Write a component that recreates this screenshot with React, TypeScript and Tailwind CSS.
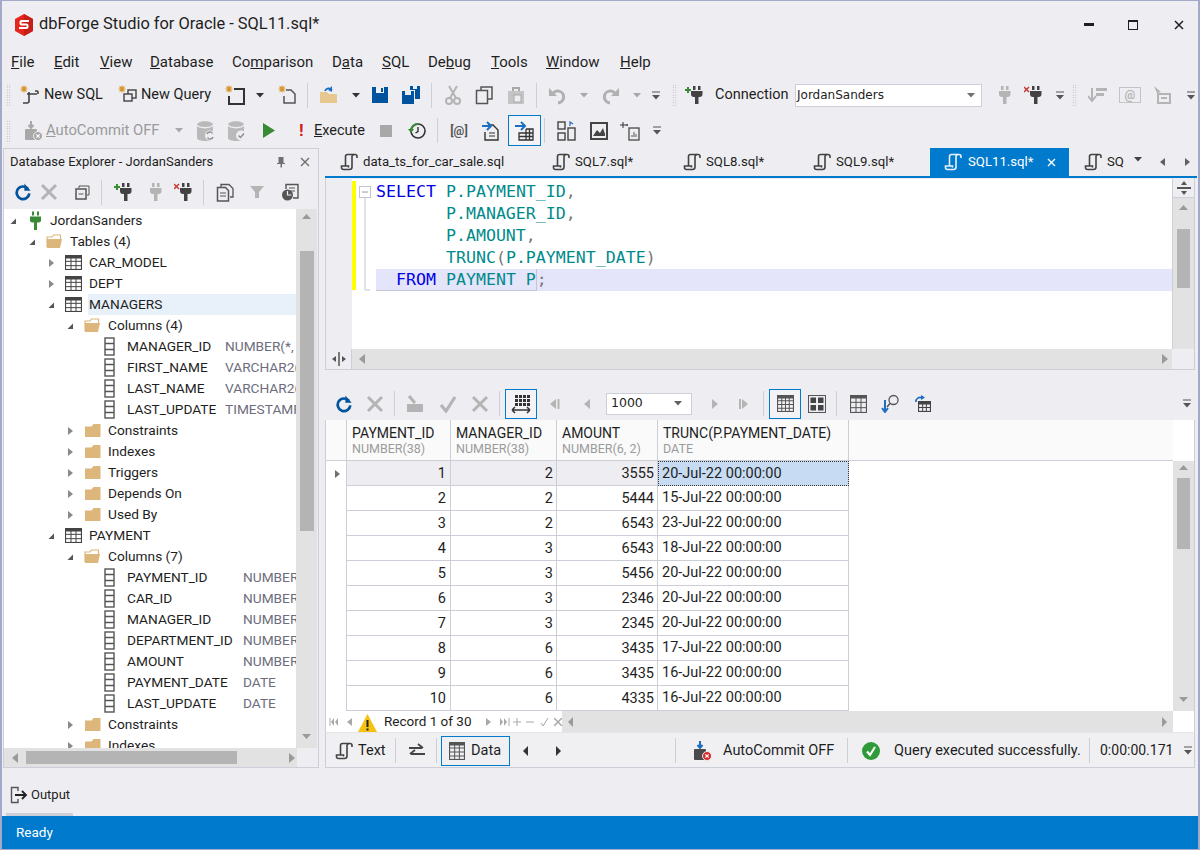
import type { ReactNode } from 'react';

const DARK = '#424242';
const GRAY = '#b4b4b4';
const BLUE = '#00539c';
const TAN = '#dcb67a';

function Svg({ w = 18, h = 18, vb, children }: { w?: number; h?: number; vb?: string; children: ReactNode }) {
  return <svg width={w} height={h} viewBox={vb ?? `0 0 ${w} ${h}`} fill="none" className="shrink-0">{children}</svg>;
}

function Logo() {
  return (
    <Svg w={20} h={24} vb="0 0 20 24">
      <path d="M10 1l9 5v12l-9 5-9-5V6z" fill="#e5261f" />
      <path d="M10 1l9 5v12l-9 5z" fill="#c81e18" />
      <path d="M15 8H7.500a1 1 0 0 0-1 1v1.500a1 1 0 0 0 1 1h5a1 1 0 0 1 1 1V14a1 1 0 0 1-1 1H5" stroke="#fff" strokeWidth="2" />
    </Svg>
  );
}

function Scroll({ c = DARK, size = 18 }: { c?: string; size?: number }) {
  return (
    <Svg w={size} h={size} vb="0 0 18 18">
      <path d="M5.500 13V3.500a2 2 0 0 1 2-2H15a2 2 0 0 1 2 2V5" stroke={c} strokeWidth="1.6" />
      <path d="M14 1.500a2 2 0 0 0-2 2V14a2.500 2.500 0 0 1-2.500 2.500H3.500a2 2 0 0 1-2-2V13h7v1.500" stroke={c} strokeWidth="1.6" />
    </Svg>
  );
}

function Spark({ c = '#d9932b' }: { c?: string }) {
  return <path d="M4 0.500v7M0.500 4h7M1.500 1.500l5 5M6.500 1.500l-5 5" stroke={c} strokeWidth="1.1" />;
}

function Plug({ c = DARK, mark }: { c?: string; mark?: 'plus' | 'x' }) {
  return (
    <Svg w={20} h={20}>
      <g transform="translate(3 0)">
        <path d="M5 1h2.500v4H5zM10 1h2.500v4H10z" fill={c} />
        <path d="M3 6h11.500v3a3 3 0 0 1-3 3h-1v7H7v-7H6a3 3 0 0 1-3-3z" fill={c} />
      </g>
      {mark === 'plus' && <path d="M0 5h6M3 2v6" stroke="#388a34" strokeWidth="2" />}
      {mark === 'x' && <path d="M0 2l5 5M5 2l-5 5" stroke="#c5352b" strokeWidth="1.4" />}
    </Svg>
  );
}

function Refresh({ size = 20 }: { size?: number }) {
  return (
    <Svg w={size} h={size} vb="0 0 20 20">
      <path d="M15.500 6.500a7 7 0 1 0 1.500 5" stroke={BLUE} strokeWidth="3" />
      <path d="M11.500 0.500v8h7z" fill={BLUE} />
    </Svg>
  );
}

function Cross({ c = GRAY, size = 18 }: { c?: string; size?: number }) {
  return (
    <Svg w={size} h={size}>
      <path d="M2 2l14 14M16 2L2 16" stroke={c} strokeWidth="3" />
    </Svg>
  );
}

function Check({ c = GRAY }: { c?: string }) {
  return (
    <Svg w={18} h={18}>
      <path d="M2 10l5 6L16 2" stroke={c} strokeWidth="3.2" />
    </Svg>
  );
}

function Db({ mark }: { mark: 'sync' | 'check' }) {
  return (
    <Svg w={20} h={22}>
      <path d="M1 5c0-5 16-5 16 0v13c0 4-16 4-16 0z" fill="#b9b9b9" />
      <path d="M1 5c2 3.500 14 3.500 16 0" stroke="#eeeef2" strokeWidth="1.5" />
      <circle cx="14" cy="15.500" r="5" fill="#eeeef2" />
      {mark === 'check' ? <path d="M11.500 15.500l2 2 3.500-4" stroke="#8c8c8c" strokeWidth="1.4" /> : <path d="M11 14a3 3 0 0 1 5.500-.5M17 17a3 3 0 0 1-5.500.5" stroke="#8c8c8c" strokeWidth="1.4" />}
    </Svg>
  );
}

function Commit({ disabled }: { disabled?: boolean }) {
  const c = disabled ? '#a8a8a8' : '#4a4a4a';
  return (
    <Svg w={20} h={22}>
      <path d="M3 9h10a1 1 0 0 1 1 1v9a1 1 0 0 1-1 1H3a1 1 0 0 1-1-1v-9a1 1 0 0 1 1-1z" fill={c} />
      <path d="M8 1v6M5.500 5L8 8l2.500-3" stroke={disabled ? '#a8a8a8' : '#1b6ec2'} strokeWidth="2" />
      <circle cx="15" cy="16" r="4.500" fill={disabled ? '#a8a8a8' : '#d92b2b'} stroke="#eeeef2" />
      <path d="M13.300 14.300l3.400 3.400M16.700 14.300l-3.400 3.400" stroke="#fff" strokeWidth="1.2" />
    </Svg>
  );
}

function Grid({ c = DARK, w = 18, h = 16, cols = 4, rows = 4 }: { c?: string; w?: number; h?: number; cols?: number; rows?: number }) {
  const xs = Array.from({ length: cols - 1 }, (_, i) => ((i + 1) * (w - 2)) / cols + 1);
  const ys = Array.from({ length: rows - 1 }, (_, i) => ((i + 1) * (h - 2)) / rows + 1);
  return (
    <Svg w={w} h={h}>
      <rect x="0.500" y="0.500" width={w - 1} height={h - 1} stroke={c} strokeWidth="1.2" />
      <rect x="0.500" y="0.500" width={w - 1} height="3" fill={c} />
      {xs.map((x) => <path key={x} d={`M${x} 1V${h - 1}`} stroke={c} />)}
      {ys.map((y) => <path key={y} d={`M1 ${y + 1}H${w - 1}`} stroke={c} />)}
    </Svg>
  );
}

function FolderOpen() {
  return (
    <Svg w={18} h={15}>
      <path d="M1 3h5l1.500-2h7V6H4L1 13z" fill="none" stroke={TAN} strokeWidth="1.2" />
      <path d="M1 5h15l-2 9H1z" fill={TAN} />
    </Svg>
  );
}

function FolderClosed() {
  return (
    <Svg w={18} h={15}>
      <path d="M1 3.500h6.500L9.500 1h7v13H1z" fill={TAN} />
    </Svg>
  );
}

function ColumnIcon() {
  return (
    <Svg w={11} h={19}>
      <rect x="1" y="1" width="9" height="17" stroke="#555" strokeWidth="1.4" />
      <path d="M1 6.500h9M1 12.500h9" stroke="#555" strokeWidth="1.4" />
    </Svg>
  );
}

function Tri({ open, c = '#555' }: { open?: boolean; c?: string }) {
  return open ? (
    <Svg w={8} h={8}><path d="M7 1.500V7H1.500z" fill={c} /></Svg>
  ) : (
    <Svg w={8} h={10}><path d="M2 1l5 4-5 4z" fill="#8a8a8a" /></Svg>
  );
}

function Caret({ c = DARK }: { c?: string }) {
  return <Svg w={8} h={5}><path d="M0 0h8L4 4.500z" fill={c} /></Svg>;
}

function Overflow() {
  return (
    <Svg w={8} h={9}>
      <path d="M0 1h8" stroke="#555" />
      <path d="M0 4h8L4 8.500z" fill="#555" />
    </Svg>
  );
}

function Gripper() {
  return <div className="w-[5px] h-[22px] shrink-0 bg-[radial-gradient(#a8a8b0_0.7px,transparent_0.8px)] bg-[length:2.5px_2.5px]" />;
}

function Sep({ h = 'h-[25px]' }: { h?: string }) {
  return <div className={`w-px shrink-0 bg-[#ccced8] ${h}`} />;
}

function SideNav({ dir, c = GRAY, bar }: { dir: 'l' | 'r'; c?: string; bar?: boolean }) {
  return (
    <Svg w={14} h={14}>
      {dir === 'l' ? <path d="M9 2L3 7l6 5z" fill={c} /> : <path d="M4 2l6 5-6 5z" fill={c} />}
      {bar && (dir === 'l' ? <path d="M11.500 2v10" stroke={c} strokeWidth="2" /> : <path d="M2 2v10" stroke={c} strokeWidth="2" />)}
    </Svg>
  );
}

type TreeRow = { level: 0 | 1 | 2 | 3 | 4; label: string; icon: 'plug' | 'open' | 'closed' | 'table' | 'col'; open?: boolean; type?: string; wide?: boolean; hl?: boolean };

const tree: TreeRow[] = [
  { level: 0, label: 'JordanSanders', icon: 'plug', open: true },
  { level: 1, label: 'Tables (4)', icon: 'open', open: true },
  { level: 2, label: 'CAR_MODEL', icon: 'table' },
  { level: 2, label: 'DEPT', icon: 'table' },
  { level: 2, label: 'MANAGERS', icon: 'table', open: true, hl: true },
  { level: 3, label: 'Columns (4)', icon: 'open', open: true },
  { level: 4, label: 'MANAGER_ID', icon: 'col', type: 'NUMBER(*,' },
  { level: 4, label: 'FIRST_NAME', icon: 'col', type: 'VARCHAR2(' },
  { level: 4, label: 'LAST_NAME', icon: 'col', type: 'VARCHAR2(' },
  { level: 4, label: 'LAST_UPDATE', icon: 'col', type: 'TIMESTAMP' },
  { level: 3, label: 'Constraints', icon: 'closed' },
  { level: 3, label: 'Indexes', icon: 'closed' },
  { level: 3, label: 'Triggers', icon: 'closed' },
  { level: 3, label: 'Depends On', icon: 'closed' },
  { level: 3, label: 'Used By', icon: 'closed' },
  { level: 2, label: 'PAYMENT', icon: 'table', open: true },
  { level: 3, label: 'Columns (7)', icon: 'open', open: true },
  { level: 4, label: 'PAYMENT_ID', icon: 'col', type: 'NUMBER', wide: true },
  { level: 4, label: 'CAR_ID', icon: 'col', type: 'NUMBER', wide: true },
  { level: 4, label: 'MANAGER_ID', icon: 'col', type: 'NUMBER', wide: true },
  { level: 4, label: 'DEPARTMENT_ID', icon: 'col', type: 'NUMBER', wide: true },
  { level: 4, label: 'AMOUNT', icon: 'col', type: 'NUMBER', wide: true },
  { level: 4, label: 'PAYMENT_DATE', icon: 'col', type: 'DATE', wide: true },
  { level: 4, label: 'LAST_UPDATE', icon: 'col', type: 'DATE', wide: true },
  { level: 3, label: 'Constraints', icon: 'closed' },
  { level: 3, label: 'Indexes', icon: 'closed' },
];

const indent = ['pl-[5px]', 'pl-[24px]', 'pl-[43px]', 'pl-[62px]', 'pl-[95px]'];

function TreeIcon({ icon }: { icon: TreeRow['icon'] }) {
  if (icon === 'plug') return <Svg w={16} h={19}><path d="M4 0.500h2v4H4zM9 0.500h2v4H9z" fill="#388a34" /><path d="M2 5.500h11V9a2.500 2.500 0 0 1-2.500 2.500H9V19H6v-7.500H4.500A2.500 2.500 0 0 1 2 9z" fill="#388a34" /></Svg>;
  if (icon === 'open') return <FolderOpen />;
  if (icon === 'closed') return <FolderClosed />;
  if (icon === 'table') return <Grid c="#444" w={17} h={15} cols={3} rows={3} />;
  return <ColumnIcon />;
}

function TreeItem({ r }: { r: TreeRow }) {
  return (
    <div className={`flex items-center h-[21px] shrink-0 ${indent[r.level]}`}>
      {r.level < 4 && (
        <div className="w-[17px] shrink-0 flex items-center">
          <Tri open={r.open} />
        </div>
      )}
      <div className={`flex items-center shrink-0 ${r.level === 0 ? 'w-[24px] pl-[2px]' : r.level === 4 ? 'w-[28px] pl-[5px]' : 'w-[25px] pl-[1px]'}`}>
        <TreeIcon icon={r.icon} />
      </div>
      <div className={`flex items-center h-[21px] grow min-w-0 ${r.hl ? 'bg-[#e8f0f9]' : ''} ${r.level === 2 ? 'pl-[1px] -ml-[1px]' : ''}`}>
        <span className={`text-[#1e1e1e] whitespace-nowrap shrink-0 ${r.type ? (r.wide ? 'w-[116px]' : 'w-[98px]') : ''}`}>{r.label}</span>
        {r.type && <span className="text-[#6d6d7d] whitespace-nowrap overflow-hidden">{r.type}</span>}
      </div>
    </div>
  );
}

function Explorer() {
  return (
    <div className="w-[316px] shrink-0 border border-[#ccced8] flex flex-col h-[620px]">
      <div className="h-[26px] shrink-0 flex items-center pl-[6px] pr-[6px] text-[13px] text-[#1e1e1e]">
        <span className="grow">Database Explorer - JordanSanders</span>
        <Svg w={10} h={12}><path d="M2.500 1h5v6h1.500v1H6v3.500H4.500V8H1V7h1.500z" fill="#707070" /></Svg>
        <span className="w-[14px]" />
        <Svg w={10} h={10}><path d="M1 1l8 8M9 1l-8 8" stroke="#707070" strokeWidth="1.4" /></Svg>
        <span className="w-[2px]" />
      </div>
      <div className="h-[34px] shrink-0 flex items-center pl-[10px]">
        <div className="w-[26px]"><Refresh size={18} /></div>
        <div className="w-[35px]"><Cross /></div>
        <div className="w-[26px]"><Svg w={15} h={15}><path d="M4 3V1h10v9h-2" stroke="#555" /><rect x="1" y="4" width="10" height="10" stroke="#555" strokeWidth="1.5" /><path d="M3.500 9h5" stroke="#555" /></Svg></div>
        <Sep />
        <div className="w-[12px]" />
        <div className="w-[30px]"><Plug mark="plus" /></div>
        <div className="w-[30px]"><Plug c={GRAY} /></div>
        <div className="w-[29px]"><Plug mark="x" /></div>
        <Sep />
        <div className="w-[12px]" />
        <div className="w-[33px]"><Svg w={19} h={19}><path d="M5 4V1.500h8l4 4V14h-3" stroke="#555" strokeWidth="1.3" /><path d="M1.500 4.500h8l3 3V18h-11z" stroke="#555" strokeWidth="1.5" /><path d="M4 10h6M4 13h6" stroke="#555" /></Svg></div>
        <div className="w-[32px]"><Svg w={16} h={16}><path d="M1 2h14L10 8v6H6V8z" fill={GRAY} /></Svg></div>
        <div><Svg w={19} h={19}><path d="M5 6V1.500h12V15h-5" stroke="#555" strokeWidth="1.4" /><path d="M8 5h6M8 8h6" stroke="#555" /><circle cx="6.500" cy="12" r="5.500" fill="#555" /><path d="M6.500 8v4h4" stroke="#eeeef2" strokeWidth="1.2" /></Svg></div>
      </div>
      <div className="flex grow min-h-0">
        <div className="w-[292px] bg-white overflow-hidden flex flex-col shrink-0 text-[13.7px] pt-[1px]">
          {tree.map((r, i) => <TreeItem key={i} r={r} />)}
        </div>
        <div className="w-[21px] bg-[#e2e2e2] flex flex-col items-center">
          <div className="h-[14px] pt-[5px]"><Svg w={9} h={5}><path d="M0 5L4.500 0 9 5z" fill="#9a9a9a" /></Svg></div>
          <div className="h-[28px]" />
          <div className="w-[14px] h-[280px] bg-[#b4b4b4]" />
          <div className="grow" />
          <div className="h-[14px]"><Svg w={9} h={5}><path d="M0 0h9L4.500 5z" fill="#9a9a9a" /></Svg></div>
        </div>
      </div>
      <div className="h-[19px] shrink-0 flex bg-[#e2e2e2] items-center">
        <div className="w-[22px] pl-[7px]"><Svg w={8} h={10}><path d="M7 0v10L1 5z" fill="#9a9a9a" /></Svg></div>
        <div className="w-[211px] h-[13px] bg-[#b4b4b4]" />
        <div className="w-[51px]" />
        <div className="w-[8px]"><Svg w={8} h={10}><path d="M1 0v10l6-5z" fill="#9a9a9a" /></Svg></div>
        <div className="grow" />
        <div className="w-[21px] h-[19px] bg-[#eeeef2]" />
      </div>
    </div>
  );
}

const tabs: { label: string; w: string; active?: boolean }[] = [
  { label: 'data_ts_for_car_sale.sql', w: 'w-[212px]' },
  { label: 'SQL7.sql*', w: 'w-[131px]' },
  { label: 'SQL8.sql*', w: 'w-[130px]' },
  { label: 'SQL9.sql*', w: 'w-[127px]' },
  { label: 'SQL11.sql*', w: 'w-[139px]', active: true },
];

function TabStrip() {
  return (
    <div className="h-[28px] shrink-0 flex text-[13.2px] pl-[1px] w-[872px]">
      <div className="w-[4px]" />
      {tabs.map((t) =>
        t.active ? (
          <div key={t.label} className={`${t.w} bg-[#007acc] text-white flex items-center pl-[14px]`}>
            <Scroll c="#e9f2fa" />
            <span className="ml-[6px] w-[67px] whitespace-nowrap">{t.label}</span>
            <span className="ml-[12px]"><Svg w={9} h={9}><path d="M1 1l7 7M8 1L1 8" stroke="#fff" strokeWidth="1.4" /></Svg></span>
          </div>
        ) : (
          <div key={t.label} className={`${t.w} flex items-center pl-[10px] text-[#1e1e1e]`}>
            <Scroll />
            <span className="ml-[5px] whitespace-nowrap">{t.label}</span>
          </div>
        ),
      )}
      <div className="flex items-center pl-[15px] text-[#1e1e1e] grow">
        <Scroll />
        <span className="ml-[5px] w-[18px]">SQ</span>
        <span className="ml-[9px] mb-[5px]"><Caret /></span>
        <span className="ml-[18px]"><Svg w={6} h={8}><path d="M5 0v8L0 4z" fill="#606060" /></Svg></span>
        <span className="ml-[18px]"><Svg w={6} h={8}><path d="M1 0v8l5-4z" fill="#606060" /></Svg></span>
      </div>
    </div>
  );
}

function Editor() {
  return (
    <div className="h-[191px] shrink-0 border-l border-r border-b border-[#ccced8] flex flex-col">
      <div className="h-[170px] flex shrink-0">
        <div className="w-[26px] bg-[#eeeef2] shrink-0" />
        <div className="grow bg-white flex min-w-0 pt-[2px]">
          <div className="w-[24px] h-[110px] shrink-0">
            <svg width="24" height="110" viewBox="0 0 24 110" fill="none">
              <rect x="0" y="0" width="4" height="109" fill="#ffff00" />
              <rect x="7.500" y="5.500" width="11" height="11" stroke="#c3c5d0" />
              <path d="M10 11h6" stroke="#9a9aa5" />
              <path d="M13 17v92h5" stroke="#c3c5d0" />
            </svg>
          </div>
          <div className="grow font-['DejaVu_Sans_Mono',monospace] text-[16.6px] leading-[22px] whitespace-pre text-[#008b8b] min-w-0">
            <div><span className="text-[#0000e6]">SELECT</span> P.PAYMENT_ID<span className="text-[#777]">,</span></div>
            <div>       P.MANAGER_ID<span className="text-[#777]">,</span></div>
            <div>       P.AMOUNT<span className="text-[#777]">,</span></div>
            <div>       TRUNC<span className="text-[#777]">(</span>P.PAYMENT_DATE<span className="text-[#777]">)</span></div>
            <div className="bg-[#e4e4fb] h-[22px]"><span className="inline-block border-r border-b border-[#c3c5d0] h-[22px]">  <span className="text-[#0000e6]">FROM</span> PAYMENT P</span><span className="text-[#777]">;</span></div>
          </div>
        </div>
        <div className="w-[22px] bg-[#e2e2e2] shrink-0 flex flex-col items-center border-l border-[#ccced8]">
          <div className="h-[19px] w-full bg-[#eeeef2] flex items-center justify-center border-b border-[#ccced8]">
            <Svg w={14} h={14}><path d="M4 4h6L7 0zM4 10h6l-3 4z" fill="#555" /><path d="M0 7h14" stroke="#555" strokeWidth="2" /></Svg>
          </div>
          <div className="h-[14px] pt-[7px]"><Svg w={9} h={5}><path d="M0 5L4.500 0 9 5z" fill="#9a9a9a" /></Svg></div>
          <div className="h-[17px]" />
          <div className="w-[13px] h-[59px] bg-[#b4b4b4]" />
        </div>
      </div>
      <div className="h-[20px] flex bg-[#e2e2e2] items-center shrink-0">
        <div className="w-[26px] h-[20px] bg-[#eeeef2] flex items-center justify-center border-r border-[#ccced8]">
          <Svg w={14} h={14}><path d="M4 4v6L0 7zM10 4v6l4-3z" fill="#555" /><path d="M7 0v14" stroke="#555" strokeWidth="1.5" /></Svg>
        </div>
        <div className="pl-[6px] grow"><Svg w={8} h={10}><path d="M7 0v10L1 5z" fill="#9a9a9a" /></Svg></div>
        <div className="w-[8px]"><Svg w={8} h={10}><path d="M1 0v10l6-5z" fill="#9a9a9a" /></Svg></div>
        <div className="w-[22px] h-[20px] ml-[3px] bg-[#eeeef2]" />
      </div>
    </div>
  );
}

function GridToolbar() {
  return (
    <div className="h-[31px] shrink-0 flex items-center mt-[18px] pl-[10px]">
      <div className="w-[31px]"><Refresh size={18} /></div>
      <div className="w-[28px]"><Cross /></div>
      <Sep />
      <div className="w-[11px]" />
      <div className="w-[33px]"><Svg w={18} h={18}><path d="M1 9h16v8H1z" fill={GRAY} /><path d="M3 1l6 7" stroke={GRAY} strokeWidth="3" /></Svg></div>
      <div className="w-[32px]"><Check /></div>
      <div className="w-[28px]"><Cross /></div>
      <Sep />
      <div className="w-[5px]" />
      <div className="w-[32px] h-[30px] border border-[#007acc] bg-[#f3f3f6] flex items-center justify-center">
        <Svg w={20} h={20}><g fill="#333">{[5, 9, 13, 17].map((x) => [1, 5, 9].map((y) => <rect key={`${x}${y}`} x={x - 1} y={y} width="3" height="3" />))}</g><path d="M1 16h18M1 16l3-3M1 16l3 3M19 16l-3-3M19 16l-3 3" stroke="#333" strokeWidth="1.5" /></Svg>
      </div>
      <div className="w-[10px]" />
      <div className="w-[34px]"><SideNav dir="l" bar /></div>
      <div className="w-[25px]"><SideNav dir="l" /></div>
      <div className="w-[86px] h-[22px] bg-white border border-[#ccced8] flex items-center justify-between pl-[4px] pr-[9px] text-[#1e1e1e] font-['DejaVu_Sans',sans-serif]">
        <span className="text-[12.5px]">1000</span>
        <Caret c="#606060" />
      </div>
      <div className="w-[16px]" />
      <div className="w-[30px]"><SideNav dir="r" /></div>
      <div className="w-[25px]"><SideNav dir="r" bar /></div>
      <Sep />
      <div className="w-[5px]" />
      <div className="w-[32px] h-[30px] border border-[#007acc] bg-[#f3f3f6] flex items-center justify-center"><Grid c="#555" w={17} h={17} /></div>
      <div className="w-[7px]" />
      <div className="w-[28px]">
        <Svg w={18} h={18}>
          <rect x="0.500" y="0.500" width="17" height="17" stroke="#555" />
          <rect x="2.500" y="2.500" width="5.500" height="5.500" fill="#444" /><rect x="10" y="2.500" width="5.500" height="5.500" fill="#444" /><rect x="2.500" y="10" width="5.500" height="5.500" fill="#444" /><rect x="10" y="10" width="5.500" height="5.500" fill="#444" />
        </Svg>
      </div>
      <Sep />
      <div className="w-[13px]" />
      <div className="w-[31px]"><Grid c="#555" w={17} h={18} cols={3} rows={3} /></div>
      <div className="w-[32px]"><Svg w={19} h={19}><circle cx="12.500" cy="6" r="4.500" stroke="#555" strokeWidth="1.3" /><path d="M9 9.500L6 13" stroke="#555" strokeWidth="1.5" /><path d="M4 6v11M1 14l3 4 3-4" stroke="#1b6ec2" strokeWidth="2" /></Svg></div>
      <div className="w-[20px]"><Svg w={19} h={19}><path d="M3 8a4 4 0 0 1 6-4" stroke="#1b6ec2" strokeWidth="1.6" /><path d="M8 1v5l4-2.500z" fill="#1b6ec2" /><g transform="translate(5 7)"><Grid c="#444" w={13} h={11} cols={3} rows={2} /></g></Svg></div>
      <div className="grow" />
      <div className="pr-[4px]"><Overflow /></div>
    </div>
  );
}

const rows = [
  [1, 2, 3555, '20-Jul-22 00:00:00'],
  [2, 2, 5444, '15-Jul-22 00:00:00'],
  [3, 2, 6543, '23-Jul-22 00:00:00'],
  [4, 3, 6543, '18-Jul-22 00:00:00'],
  [5, 3, 5456, '20-Jul-22 00:00:00'],
  [6, 3, 2346, '20-Jul-22 00:00:00'],
  [7, 3, 2345, '20-Jul-22 00:00:00'],
  [8, 6, 3435, '17-Jul-22 00:00:00'],
  [9, 6, 3435, '16-Jul-22 00:00:00'],
  [10, 6, 4335, '16-Jul-22 00:00:00'],
];

const cols = [
  { name: 'PAYMENT_ID', type: 'NUMBER(38)', w: 'w-[104px]' },
  { name: 'MANAGER_ID', type: 'NUMBER(38)', w: 'w-[106px]' },
  { name: 'AMOUNT', type: 'NUMBER(6, 2)', w: 'w-[101px]' },
  { name: 'TRUNC(P.PAYMENT_DATE)', type: 'DATE', w: 'w-[191px]' },
];

function DataGrid() {
  return (
    <div className="h-[291px] shrink-0 flex border-l border-r border-[#ccced8] text-[14.5px] mt-[1px]">
      <div className="w-[847px] bg-white flex flex-col shrink-0">
        <div className="flex h-[41px] shrink-0 border-b border-[#ccced8]">
          <div className="w-[21px] border-r border-[#ccced8] bg-[#fafafa]" />
          {cols.map((c) => (
            <div key={c.name} className={`${c.w} border-r border-[#ccced8] bg-[#fafafa] pl-[5px] pt-[5px] leading-[16px] text-[14px]`}>
              <div className="text-[#1e1e1e] whitespace-nowrap">{c.name}</div>
              <div className="text-[#9a9a9a] text-[12.5px] whitespace-nowrap">{c.type}</div>
            </div>
          ))}
          <div className="grow bg-[#fafafa]" />
        </div>
        {rows.map((r, i) => (
          <div key={i} className="flex h-[25px] shrink-0">
            <div className="w-[21px] border-r border-[#ccced8] flex items-center justify-center pl-[2px]">
              {i === 0 && <Svg w={6} h={8}><path d="M1 0v8l5-4z" fill="#707070" /></Svg>}
            </div>
            {[0, 1, 2].map((c) => (
              <div key={c} className={`${cols[c].w} border-r border-b border-[#ccced8] text-right pr-[3px] pt-[1px] leading-[23px] text-[#1e1e1e] ${i === 0 ? 'bg-[#eeeef2]' : ''}`}>
                {c === 0 ? <span className="pr-[1px]">{r[c]}</span> : r[c]}
              </div>
            ))}
            <div className={`w-[191px] pt-[1px] leading-[22px] text-[#1e1e1e] ${i === 0 ? 'pl-[3px] bg-[#c7dcf3] border border-dotted border-[#333]' : 'pl-[4px] border-r border-b border-[#ccced8]'}`}>{r[3]}</div>
          </div>
        ))}
      </div>
      <div className="grow bg-white" />
      <div className="w-[21px] bg-[#e2e2e2] flex flex-col items-center shrink-0">
        <div className="h-[41px] w-full bg-white" />
        <div className="h-[17px] pt-[4px]"><Svg w={9} h={5}><path d="M0 5L4.500 0 9 5z" fill="#9a9a9a" /></Svg></div>
        <div className="w-[13px] h-[71px] bg-[#b4b4b4]" />
        <div className="grow" />
        <div className="h-[14px]"><Svg w={9} h={5}><path d="M0 0h9L4.500 5z" fill="#9a9a9a" /></Svg></div>
      </div>
    </div>
  );
}

function Navigator() {
  const small = <Svg w={6} h={8}><path d="M5 0v8L0 4z" fill="#a8a8a8" /></Svg>;
  return (
    <div className="h-[21px] shrink-0 flex items-center border-l border-r border-[#ccced8] bg-white text-[13.5px]">
      <div className="w-[236px] h-full flex items-center pl-[3px] shrink-0">
        <div className="w-[18px]"><Svg w={9} h={8}><path d="M1 0v8" stroke="#a8a8a8" /><path d="M5 0v8L2 4zM9 0v8L6 4z" fill="#a8a8a8" /></Svg></div>
        <div className="w-[11px]">{small}</div>
        <div className="w-[26px] h-[21px] flex items-end">
          <Svg w={19} h={18}><path d="M9.500 0L19 18H0z" fill="#f5c211" /><path d="M9.500 6v7M9.500 14.500v2" stroke="#222" strokeWidth="2" /></Svg>
        </div>
        <span className="whitespace-nowrap text-[#1e1e1e] w-[101px]">Record 1 of 30</span>
        <div className="w-[15px]"><Svg w={6} h={8}><path d="M1 0v8l5-4z" fill="#a8a8a8" /></Svg></div>
        <div className="w-[13px]"><Svg w={10} h={8}><path d="M0 0v8l3-4zM4 0v8l3-4z" fill="#a8a8a8" /><path d="M9 0v8" stroke="#a8a8a8" /></Svg></div>
        <div className="w-[13px]"><Svg w={8} h={8}><path d="M0 4h8M4 0v8" stroke="#a8a8a8" /></Svg></div>
        <div className="w-[14px]"><Svg w={8} h={8}><path d="M0 4h8" stroke="#a8a8a8" /></Svg></div>
        <div className="w-[14px]"><Svg w={9} h={10}><path d="M1 6l2 3 5-8" stroke="#a8a8a8" /></Svg></div>
        <div><Svg w={8} h={8}><path d="M0 0l8 8M8 0L0 8" stroke="#a8a8a8" strokeWidth="1.5" /></Svg></div>
      </div>
      <div className="grow h-full bg-[#e2e2e2] flex items-center justify-between px-[6px]">
        <Svg w={6} h={10}><path d="M5 0v10L0 5z" fill="#9a9a9a" /></Svg>
        <Svg w={6} h={10}><path d="M1 0v10l5-5z" fill="#9a9a9a" /></Svg>
      </div>
      <div className="w-[21px] h-full bg-white shrink-0" />
    </div>
  );
}

function BottomBar() {
  return (
    <div className="h-[35px] shrink-0 flex items-center pt-[1px] text-[14.5px] text-[#1e1e1e] bg-[#f0f0f3] border-t border-[#e4e4ea] border-l border-r border-l-[#ccced8] border-r-[#ccced8]">
      <div className="w-[9px]" />
      <Scroll />
      <span className="ml-[5px] w-[37px]">Text</span>
      <Sep />
      <div className="w-[13px]" />
      <div className="w-[27px]"><Svg w={16} h={16}><path d="M0 5h13M9 1l5 4M2 11h14M6 7l-5 4" stroke="#444" strokeWidth="1.8" /></Svg></div>
      <Sep />
      <div className="w-[4px]" />
      <div className="w-[69px] h-[30px] border border-[#007acc] flex items-center pl-[7px]">
        <Grid c="#555" w={16} h={18} cols={3} rows={4} />
        <span className="ml-[6px]">Data</span>
      </div>
      <div className="w-[13px]" />
      <Svg w={6} h={10}><path d="M5 0v10L0 5z" fill="#333" /></Svg>
      <div className="w-[26px]" />
      <Svg w={6} h={10}><path d="M1 0v10l5-5z" fill="#333" /></Svg>
      <div className="w-[114px]" />
      <Sep />
      <div className="w-[16px]" />
      <Commit />
      <span className="ml-[11px] w-[124px] whitespace-nowrap">AutoCommit OFF</span>
      <Sep />
      <div className="w-[14px]" />
      <Svg w={18} h={18}>
        <circle cx="9" cy="9" r="9" fill="#2e9a38" />
        <path d="M5 9.500l3 3.500 5-8" stroke="#fff" strokeWidth="2.2" />
      </Svg>
      <span className="ml-[14px] w-[195px] whitespace-nowrap">Query executed successfully.</span>
      <Sep />
      <span className="ml-[10px] w-[84px] whitespace-nowrap text-[14px]">0:00:00.171</span>
      <Overflow />
    </div>
  );
}

function TopToolbars() {
  return (
    <div className="shrink-0 text-[14.5px] text-[#1e1e1e]">
      <div className="h-[30px] flex items-center mt-[5px] pl-[4px]">
        <Gripper />
        <div className="w-[9px]" />
        <Svg w={19} h={20}><Spark /><path d="M7 9h10M15 6h2a1 1 0 0 1 1 1v2M9 7v9a2 2 0 0 1-2 2H3" stroke={DARK} strokeWidth="1.6" /></Svg>
        <span className="ml-[5px] w-[60px] whitespace-nowrap">New SQL</span>
        <div className="w-[14px]" />
        <Svg w={19} h={20}><Spark /><rect x="10" y="5" width="8" height="8" stroke={DARK} strokeWidth="1.4" /><rect x="6" y="9" width="8" height="7" fill="#eeeef2" stroke={DARK} strokeWidth="1.4" /></Svg>
        <span className="ml-[4px] w-[84px] whitespace-nowrap">New Query</span>
        <Svg w={20} h={20}><Spark /><path d="M9 4h10v15H4v-8" stroke="#333" strokeWidth="2" /></Svg>
        <div className="w-[11px]" />
        <Caret c="#333" />
        <div className="w-[14px]" />
        <Svg w={18} h={20}><Spark /><path d="M8 5h5l4 4v9H6v-7" stroke="#555" strokeWidth="1.5" /></Svg>
        <div className="w-[11px]" />
        <Sep />
        <div className="w-[10px]" />
        <Svg w={22} h={20}><path d="M2 7h7l2 2h8v9H2z" fill="#e8c891" /><path d="M7 6a4 4 0 0 1 7-1" stroke="#1b6ec2" strokeWidth="1.7" /><path d="M14 1v6l-4-2z" fill="#1b6ec2" /></Svg>
        <div className="w-[12px]" />
        <Caret c="#333" />
        <div className="w-[11px]" />
        <Svg w={18} h={18}><path d="M1 1h16v16H1z" fill={BLUE} /><rect x="5" y="1" width="8" height="6" fill="#eeeef2" /><rect x="10" y="2" width="2" height="4" fill={BLUE} /></Svg>
        <div className="w-[12px]" />
        <Svg w={20} h={20}><path d="M1 6h12v13H1z" fill={BLUE} /><rect x="4" y="6" width="6" height="4" fill="#eeeef2" /><path d="M9 1h10v13h-5V5H9z" fill={BLUE} /><rect x="12" y="1" width="4" height="3" fill="#eeeef2" /></Svg>
        <div className="w-[10px]" />
        <Sep />
        <div className="w-[12px]" />
        <Svg w={18} h={20}><path d="M5 1l7 12M13 1L6 13" stroke={GRAY} strokeWidth="2" /><circle cx="5" cy="16" r="3" stroke={GRAY} strokeWidth="2" /><circle cx="13" cy="16" r="3" stroke={GRAY} strokeWidth="2" /></Svg>
        <div className="w-[13px]" />
        <Svg w={18} h={20}><path d="M6 5V2h11v12h-4" stroke="#555" strokeWidth="1.5" /><rect x="1.500" y="5.500" width="11" height="13" stroke="#555" strokeWidth="1.5" /></Svg>
        <div className="w-[14px]" />
        <Svg w={18} h={20}><path d="M1 6h16v13H1z" fill="#c4c4c4" /><path d="M6 6V3h6v3" stroke="#a8a8a8" strokeWidth="2" /><rect x="7" y="10" width="7" height="7" fill="#eeeef2" stroke="#a8a8a8" /></Svg>
        <div className="w-[11px]" />
        <Sep />
        <div className="w-[12px]" />
        <Svg w={17} h={20}><path d="M3 10a6 6 0 1 1 6 8" stroke="#b0b0b0" strokeWidth="3" /><path d="M0 3v8h8z" fill="#b0b0b0" /></Svg>
        <div className="w-[14px]" />
        <Caret c="#a8a8a8" />
        <div className="w-[14px]" />
        <Svg w={17} h={20}><path d="M14 10a6 6 0 1 0-6 8" stroke="#b0b0b0" strokeWidth="3" /><path d="M17 3v8H9z" fill="#b0b0b0" /></Svg>
        <div className="w-[14px]" />
        <Caret c="#a8a8a8" />
        <div className="w-[11px]" />
        <Overflow />
        <div className="w-[12px]" />
        <Gripper />
        <div className="w-[8px]" />
        <Plug mark="plus" />
        <span className="ml-[10px] w-[80px] whitespace-nowrap">Connection</span>
        <div className="w-[187px] h-[23px] bg-white border border-[#ccced8] flex items-center justify-between pl-[1px] pr-[6px] font-['DejaVu_Sans',sans-serif] text-[12px]">
          <span>JordanSanders</span>
          <Caret c="#707070" />
        </div>
        <div className="w-[11px]" />
        <Plug c={GRAY} />
        <div className="w-[11px]" />
        <Plug mark="x" />
        <div className="w-[12px]" />
        <Overflow />
        <div className="w-[8px]" />
        <Gripper />
        <div className="w-[11px]" />
        <Svg w={20} h={18}><path d="M8 2h11v3H8zM8 7h8v3H8z" fill={GRAY} /><path d="M4 2v12M0 10l4 5 4-5" stroke={GRAY} strokeWidth="2" /></Svg>
        <div className="w-[11px]" />
        <span className="w-[22px] text-center text-[12px] font-bold text-[#b4b4b4] border border-[#c4c4c4] leading-[14px]">@</span>
        <div className="w-[12px]" />
        <Svg w={18} h={20}><path d="M1 1l7 6-4 1 2 5" fill={GRAY} /><path d="M5 9h12v9H5z" stroke={GRAY} strokeWidth="2" /><path d="M8 13h6" stroke={GRAY} strokeWidth="2" /></Svg>
        <div className="w-[16px]" />
        <Overflow />
      </div>
      <div className="h-[31px] flex items-center mt-[5px] pl-[4px]">
        <Gripper />
        <div className="w-[12px]" />
        <Commit disabled />
        <span className="ml-[3px] w-[122px] whitespace-nowrap text-[#9a9a9a] text-[14.8px]"><span className="underline">A</span>utoCommit OFF</span>
        <div className="w-[7px]" />
        <Caret c="#a8a8a8" />
        <div className="w-[13px]" />
        <Db mark="sync" />
        <div className="w-[11px]" />
        <Db mark="check" />
        <div className="w-[16px]" />
        <Svg w={12} h={15}><path d="M0 0l12 7.500L0 15z" fill="#388a34" /></Svg>
        <div className="w-[24px]" />
        <span className="w-[10px] text-[#d02020] font-bold text-[17px] leading-none">!</span>
        <div className="w-[5px]" />
        <span className="w-[57px]"><span className="underline">E</span>xecute</span>
        <div className="w-[9px]" />
        <div className="w-[12px] h-[12px] bg-[#a8a8a8]" />
        <div className="w-[16px]" />
        <Svg w={18} h={18}><circle cx="10" cy="9" r="7" stroke="#333" strokeWidth="1.6" /><path d="M3 9a7 7 0 0 1 7-7" stroke="#388a34" strokeWidth="2.2" /><path d="M0 7h6L3 11z" fill="#388a34" /><path d="M10 5v4.500l-2.500 1.500" stroke="#333" strokeWidth="1.4" /></Svg>
        <div className="w-[11px]" />
        <Sep />
        <div className="w-[10px]" />
        <span className="w-[22px] text-[12px] font-bold text-[#555] whitespace-nowrap text-center">[@]</span>
        <div className="w-[12px]" />
        <Svg w={18} h={20}><path d="M6 4h5l5 5v10H3v-8" stroke="#333" strokeWidth="1.4" /><path d="M7 12h6M7 15h6" stroke="#333" /><path d="M0 5h8M5 1l4 4-4 4" stroke="#1b6ec2" strokeWidth="2" /></Svg>
        <div className="w-[8px]" />
        <div className="w-[33px] h-[31px] border border-[#007acc] flex items-center justify-center bg-[#f3f3f6]">
          <Svg w={20} h={20}><path d="M0 5h9M6 1l4 4-4 4" stroke="#1b6ec2" strokeWidth="2" /><path d="M11 8h7v11H4v-7h14M11 8v11M14.500 8v11M4 15.500h14" stroke="#333" strokeWidth="1.3" /></Svg>
        </div>
        <div className="w-[3px]" />
        <Sep />
        <div className="w-[12px]" />
        <Svg w={19} h={20}><rect x="1" y="1" width="7" height="7" stroke="#444" strokeWidth="1.4" /><rect x="1" y="12" width="7" height="7" stroke="#444" strokeWidth="1.4" /><rect x="11" y="7" width="7" height="12" stroke="#444" strokeWidth="1.4" /><path d="M13 5V1l3 2" stroke="#1b6ec2" strokeWidth="1.2" /></Svg>
        <div className="w-[14px]" />
        <Svg w={18} h={18}><rect x="1" y="1" width="16" height="16" stroke="#444" strokeWidth="2" /><path d="M3 14l4-6 3 3 3-5 2 6v2H3z" fill="#444" /></Svg>
        <div className="w-[12px]" />
        <Svg w={20} h={20}><path d="M3 1v6M0 4h6" stroke="#333" /><rect x="9" y="7" width="10" height="12" stroke="#555" strokeWidth="1.4" /><path d="M12 16v-2M14 16v-5M16 16v-3" stroke="#555" /><circle cx="7" cy="4" r="1" fill="#333" /></Svg>
        <div className="w-[13px]" />
        <Overflow />
      </div>
    </div>
  );
}

const menu: [string, string, string, string][] = [
  ['', 'F', 'ile', 'w-[43px]'],
  ['', 'E', 'dit', 'w-[46px]'],
  ['', 'V', 'iew', 'w-[50px]'],
  ['', 'D', 'atabase', 'w-[82px]'],
  ['Co', 'm', 'parison', 'w-[100px]'],
  ['D', 'a', 'ta', 'w-[50px]'],
  ['', 'S', 'QL', 'w-[46px]'],
  ['De', 'b', 'ug', 'w-[63px]'],
  ['', 'T', 'ools', 'w-[55px]'],
  ['', 'W', 'indow', 'w-[74px]'],
  ['', 'H', 'elp', 'w-[40px]'],
];

export default function App() {
  return (
    <div className="w-[1200px] h-[850px] bg-[#eeeef2] border-l-2 border-r-2 border-t border-b border-[#a4a9c9] flex flex-col overflow-hidden font-['Roboto',sans-serif]">
      <div className="h-[47px] shrink-0 flex items-center pl-[12px]">
        <Logo />
        <span className="ml-[5px] text-[16.4px] text-[#1e1e1e] whitespace-nowrap">dbForge Studio for Oracle - SQL11.sql*</span>
        <div className="grow" />
        <Svg w={10} h={4}><rect width="10" height="3" fill="#1e1e1e" /></Svg>
        <div className="w-[34px]" />
        <Svg w={10} h={10}><rect x="0.500" y="0.500" width="9" height="9" stroke="#1e1e1e" /><rect y="0" width="10" height="2" fill="#1e1e1e" /></Svg>
        <div className="w-[36px]" />
        <Svg w={10} h={10}><path d="M1 1l8 8M9 1l-8 8" stroke="#1e1e1e" strokeWidth="1.5" /></Svg>
        <div className="w-[14px]" />
      </div>
      <div className="h-[27px] shrink-0 flex items-center pl-[9px] pt-[2px] text-[15px] text-[#1e1e1e]">
        {menu.map(([a, u, b, w]) => (
          <span key={u + b} className={w}>{a}<span className="underline">{u}</span>{b}</span>
        ))}
      </div>
      <TopToolbars />
      <div className="flex mt-[2px] pl-[1px]">
        <Explorer />
        <div className="w-[6px] shrink-0" />
        <div className="w-[870px] shrink-0 flex flex-col h-[620px] border-b border-[#ccced8]">
          <TabStrip />
          <div className="h-[2px] bg-[#007acc] shrink-0 w-[872px]" />
          <div className="h-[1px] shrink-0 border-l border-r border-[#ccced8]" />
          <Editor />
          <GridToolbar />
          <DataGrid />
          <Navigator />
          <BottomBar />
        </div>
      </div>
      <div className="grow flex flex-col justify-end">
        <div className="pl-[4px]">
          <div className="w-[67px] h-[39px] border-b-[3px] border-[#ccced8] flex items-center pl-[4px] text-[13px] text-[#1e1e1e]">
            <Svg w={18} h={18}><path d="M8 5V1.500H1.500v15H8V13" stroke="#555" strokeWidth="1.4" /><path d="M5 9h11M12 5l4 4-4 4" stroke="#222" strokeWidth="1.8" /></Svg>
            <span className="ml-[3px]">Output</span>
          </div>
        </div>
      </div>
      <div className="h-[33px] shrink-0 bg-[#007acc] text-white text-[13.5px] flex items-center pl-[14px]">Ready</div>
    </div>
  );
}
